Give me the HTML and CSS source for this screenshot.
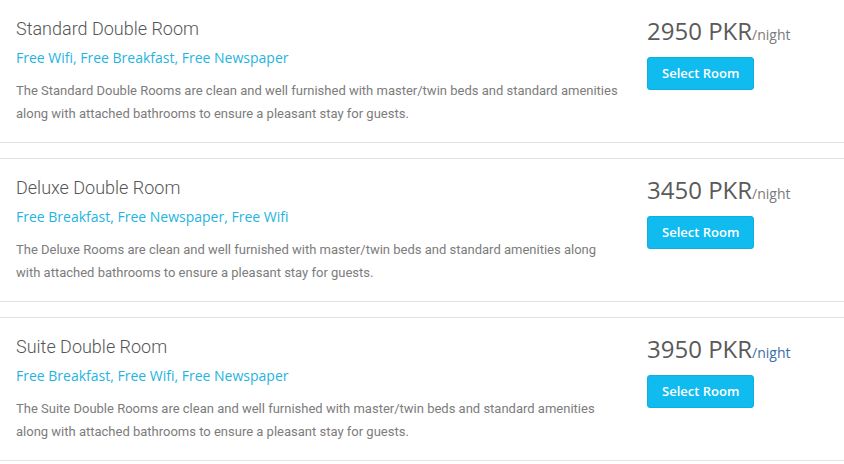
FILE: index.html
```html
<!DOCTYPE html>
<html>
<head>
<meta charset="utf-8">
<link rel="stylesheet" href="styles.css">
</head>
<body>
<div class="rooms">
  <div class="room">
    <div class="info">
      <h3 class="title">Standard Double Room</h3>
      <div class="amenities">Free Wifi, Free Breakfast, Free Newspaper</div>
      <p class="desc">The Standard Double Rooms are clean and well furnished with master/twin beds and standard amenities along with attached bathrooms to ensure a pleasant stay for guests.</p>
    </div>
    <div class="book">
      <div class="price">2950 PKR<span class="per">/night</span></div>
      <button class="select">Select Room</button>
    </div>
  </div>
  <div class="room">
    <div class="info">
      <h3 class="title">Deluxe Double Room</h3>
      <div class="amenities">Free Breakfast, Free Newspaper, Free Wifi</div>
      <p class="desc">The Deluxe Rooms are clean and well furnished with master/twin beds and standard amenities along with attached bathrooms to ensure a pleasant stay for guests.</p>
    </div>
    <div class="book">
      <div class="price">3450 PKR<span class="per">/night</span></div>
      <button class="select">Select Room</button>
    </div>
  </div>
  <div class="room">
    <div class="info">
      <h3 class="title">Suite Double Room</h3>
      <div class="amenities">Free Breakfast, Free Wifi, Free Newspaper</div>
      <p class="desc">The Suite Double Rooms are clean and well furnished with master/twin beds and standard amenities along with attached bathrooms to ensure a pleasant stay for guests.</p>
    </div>
    <div class="book">
      <div class="price">3950 PKR<span class="per per-active">/night</span></div>
      <button class="select">Select Room</button>
    </div>
  </div>
</div>
</body>
</html>
```

FILE: styles.css
```css
html, body {
  margin: 0;
  padding: 0;
  background: #ffffff;
}

.rooms {
  margin-top: -1px;
}

.room {
  display: grid;
  grid-template-columns: 631px 1fr;
  border-top: 1px solid #e2e2e2;
  border-bottom: 1px solid #e2e2e2;
  margin-bottom: 15px;
  padding: 17px 0 17px;
}

.info {
  padding-left: 16px;
}

.title {
  margin: 0;
  font-family: Roboto, "Liberation Sans", sans-serif;
  font-weight: 300;
  font-size: 18px;
  line-height: 24px;
  color: #555555;
}

.amenities {
  margin-top: 7px;
  font-family: "Open Sans", "Liberation Sans", sans-serif;
  font-size: 14px;
  line-height: 20px;
  color: #25b4e0;
}

.desc {
  max-width: 605px;
  margin: 11px 0 0;
  font-family: Roboto, "Liberation Sans", sans-serif;
  font-size: 13px;
  line-height: 23px;
  color: #7c7c7c;
}

.book {
  padding-left: 16px;
}

.price {
  font-family: "Open Sans", "Liberation Sans", sans-serif;
  font-size: 24px;
  line-height: 28px;
  color: #5a5a5a;
}

.per {
  font-size: 14px;
  line-height: 1;
  color: #7a7a7a;
}

.per-active {
  color: #3b6ea6;
}

.select {
  display: block;
  margin-top: 12px;
  padding: 6px 14px;
  border: 1px solid #0eaee0;
  border-radius: 3px;
  background: #0fbbef;
  color: #ffffff;
  font-family: "Open Sans", "Liberation Sans", sans-serif;
  font-size: 13px;
  font-weight: 600;
  line-height: 19px;
  cursor: pointer;
}
```
